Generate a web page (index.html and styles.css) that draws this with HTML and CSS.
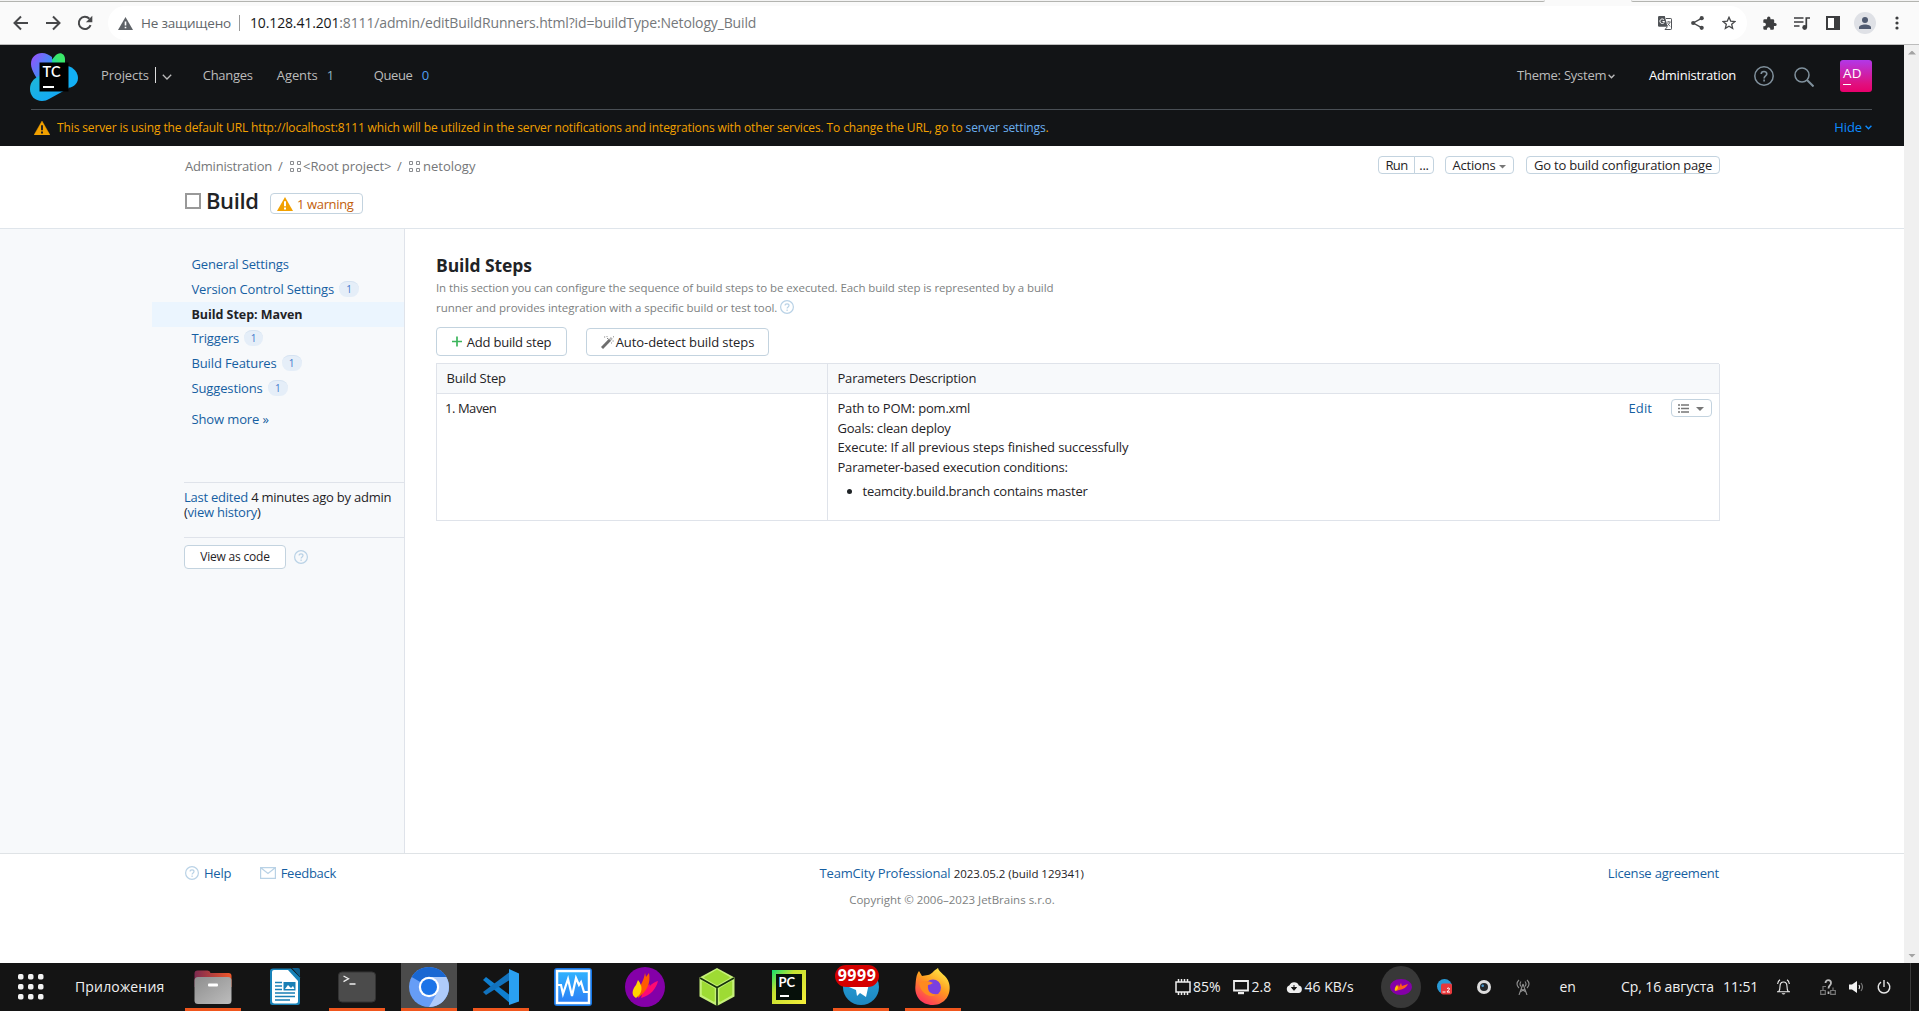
FILE: index.html
```html
<!DOCTYPE html>
<html lang="en">
<head>
<meta charset="utf-8">
<title>Build — Build Steps</title>
<link rel="stylesheet" href="styles.css">
</head>
<body>
<svg class="defs" width="0" height="0">
  <defs>
    <symbol id="warn" viewBox="0 0 16 14"><path d="M8 0 16 14H0Z" fill="#f2a100" stroke="#f2a100" stroke-width=".4" stroke-linejoin="round"/><path d="M7 4.2h2v5H7zM7 10.4h2v2H7z" fill="#222"/></symbol>
    <symbol id="warnlight" viewBox="0 0 16 14"><path d="M8 0 16 14H0Z" fill="#f2a100"/><path d="M7 4.2h2v5H7zM7 10.4h2v2H7z" fill="#fff"/></symbol>
    <symbol id="proj" viewBox="0 0 11 11"><path d="M.5.5h3v3h-3zM7.500.5h3v3h-3zM.5 7.500h3v3h-3zM7.500 7.500h3v3h-3z" fill="none" stroke="#8a8d90" stroke-width="1"/></symbol>
    <symbol id="quest" viewBox="0 0 14 14"><circle cx="7" cy="7" r="6.4" fill="none" stroke="#b9d2e6" stroke-width="1.2"/><path d="M5.1 5.6c0-2.4 3.9-2.4 3.9 0 0 1.4-1.9 1.4-1.9 3M7.1 9.6v1.3" fill="none" stroke="#b9d2e6" stroke-width="1.2"/></symbol>
    <linearGradient id="lgA" x1="0" y1="0" x2="1" y2="1"><stop offset="0" stop-color="#a04bff"/><stop offset=".55" stop-color="#4a86f5"/><stop offset="1" stop-color="#18b2f0"/></linearGradient>
    <linearGradient id="lgB" x1="0" y1="1" x2="1" y2="0"><stop offset="0" stop-color="#12c8c8"/><stop offset=".6" stop-color="#3ae86a"/></linearGradient>
    <linearGradient id="lgC" x1="0" y1="0" x2="1" y2="1"><stop offset="0" stop-color="#1fb7d6"/><stop offset="1" stop-color="#0fa5ff"/></linearGradient>
    <linearGradient id="lgFold" x1="0" y1="0" x2="1" y2="0"><stop offset="0" stop-color="#7d2a50"/><stop offset="1" stop-color="#f0582a"/></linearGradient>
    <linearGradient id="lgGrey" x1="0" y1="0" x2="1" y2="1"><stop offset="0" stop-color="#8e8e8e"/><stop offset="1" stop-color="#bdbdbd"/></linearGradient>
    <linearGradient id="lgMon" x1="0" y1="0" x2="0" y2="1"><stop offset="0" stop-color="#30b4ff"/><stop offset="1" stop-color="#2d7ff5"/></linearGradient>
    <linearGradient id="lgPc" x1="0" y1="0" x2="1" y2="1"><stop offset="0" stop-color="#10e070"/><stop offset=".35" stop-color="#c5e030"/><stop offset="1" stop-color="#f6ee3a"/></linearGradient>
    <linearGradient id="lgFx" x1=".8" y1="0" x2=".2" y2="1"><stop offset="0" stop-color="#fff04a"/><stop offset=".45" stop-color="#ff9a1f"/><stop offset="1" stop-color="#ff2a63"/></linearGradient>
    <linearGradient id="lgTg" x1="0" y1="0" x2="0" y2="1"><stop offset="0" stop-color="#2aa5dc"/><stop offset="1" stop-color="#1c86c0"/></linearGradient>
  </defs>
</svg>

<header class="browser">
  <div class="strip"><i></i><i></i></div>
  <div class="bar-row">
  <div class="nav">
    <svg width="16" height="16" viewBox="0 0 16 16"><path d="M15 8H2M8 1.5 1.5 8 8 14.5" class="ink"/></svg>
    <svg width="16" height="16" viewBox="0 0 16 16"><path d="M1 8h13M8 1.5 14.5 8 8 14.5" class="ink"/></svg>
    <svg width="16" height="16" viewBox="0 0 16 16"><path d="M13.6 10.2A6.1 6.1 0 1 1 12.4 3.8" class="ink"/><path d="M15.3.8v6.4H8.9Z" fill="#47484a"/></svg>
  </div>
  <div class="omnibox">
    <svg width="15" height="13" viewBox="0 0 15 13"><path d="M7.5 0 15 13H0Z" fill="#5f6368"/><path d="M6.7 4.5h1.6v4H6.7zM6.7 9.7h1.6v1.6H6.7z" fill="#fff"/></svg>
    <span class="insecure">Не защищено</span><i class="bar"></i>
    <span class="url"><b>10.128.41.201</b>:8111/admin/editBuildRunners.html?id=buildType:Netology_Build</span>
    <div class="omni-icons">
      <svg width="14" height="14" viewBox="0 0 14 14"><path d="M0 1.2Q0 0 1.2 0h5.6l2.7 10.7H1.2Q0 10.700 0 9.500Z" fill="#505357"/><path d="M6 3.800A2.300 2.300 0 1 0 6.500 5.500H4.500" fill="none" stroke="#fff" stroke-width="1"/><path d="M8 2.500h4.800q.7 0 .7.700v9.600q0 .7-.7.700H7l2.500-2.800" fill="none" stroke="#505357" stroke-width="1"/><path d="M8.800 6h4M10.800 5v1M12 6.200q-.8 2.300-2.800 3.600M9.600 7.200q1 2 2.700 3.100" fill="none" stroke="#505357" stroke-width=".8"/></svg>
      <svg width="13" height="14" viewBox="0 0 13 14"><path d="M11 2.200 2.200 7 11 11.800" fill="none" stroke="#47484a" stroke-width="1.400"/><g fill="#47484a"><circle cx="10.700" cy="2.200" r="2.100"/><circle cx="2.200" cy="7" r="2.100"/><circle cx="10.700" cy="11.800" r="2.100"/></g></svg>
      <svg width="14" height="14" viewBox="0 0 14 14"><path d="m7 1.300 1.700 3.800 4.200.4-3.200 2.800.95 4.100L7 10.200l-3.650 2.200.95-4.100L1.100 5.500l4.200-.4Z" fill="none" stroke="#47484a" stroke-width="1.300"/></svg>
    </div>
  </div>
  <div class="tools">
    <svg width="15" height="15" viewBox="0 0 24 24"><path fill="#3c3d3f" d="M21 11h-1.500V7a2 2 0 0 0-2-2h-4V3.500a2.700 2.700 0 0 0-5.400 0V5h-4a2 2 0 0 0-2 2v3.800H3.600a2.700 2.700 0 0 1 0 5.400H2.100V20a2 2 0 0 0 2 2h3.800v-1.500a2.700 2.700 0 0 1 5.400 0V22h3.800a2 2 0 0 0 2-2v-4H21a2.500 2.500 0 0 0 0-5Z"/></svg>
    <svg width="16" height="13" viewBox="0 0 16 13"><path d="M0 1h9.500M0 5h9.500M0 9h5.500M12.300 10V1H16" fill="none" stroke="#3c3d3f" stroke-width="1.700"/><circle cx="10.700" cy="10.500" r="2.400" fill="#3c3d3f"/></svg>
    <svg width="14" height="14" viewBox="0 0 14 14"><path d="M0 0h14v14H0Z" fill="#3c3d3f"/><path d="M2 2h6v10H2z" fill="#fff"/></svg>
    <svg width="22" height="22" viewBox="0 0 22 22"><circle cx="11" cy="11" r="11" fill="#dfe1e6"/><circle cx="11" cy="8" r="3" fill="#4f5a70"/><path d="M5 17v-1.500c0-4 12-4 12 0V17Z" fill="#4f5a70"/></svg>
    <svg width="4" height="14" viewBox="0 0 4 14" fill="#3c3d3f"><circle cx="2" cy="2" r="1.600"/><circle cx="2" cy="7" r="1.600"/><circle cx="2" cy="12" r="1.600"/></svg>
  </div>
  </div>
</header>

<div class="viewport">
  <div class="page">
    <div class="top">
      <div class="menu">
        <svg class="logo" width="48" height="48" viewBox="0 0 48 48">
          <path d="M37 13c7 1 11 7 11 12 0 7-7 10-11 10Z" fill="#12b0f5"/>
          <path d="M20 9 25 3c4-5 10-3 10 3v8H20Z" fill="url(#lgB)"/>
          <path d="M1 11C1 4 6 0 12 0c4 0 7 2 10 4v26L9 30C7 24 1 18 1 11Z" fill="url(#lgA)"/>
          <path d="M9 23C3 26 0 30 0 36c0 7 5 12 12 12 3 0 5-1 7-2l20-11-16-12Z" fill="url(#lgC)"/>
          <path d="M9.500 9.500h29v29h-29z" fill="#000"/>
          <text x="12.500" y="24" class="logo-t">TC</text><path d="M13 33h11v2H13z" fill="#fff"/>
        </svg>
        <span>Projects</span><i class="bar light"></i>
        <svg width="10" height="6" viewBox="0 0 10 6"><path d="M.8.8 5 5 9.200.8" fill="none" stroke="#bcbcbc" stroke-width="1.300"/></svg>
        <span class="m-ch">Changes</span><span class="m-ag">Agents</span><span class="cnt1">1</span><span class="m-qu">Queue</span><span class="cnt0">0</span>
        <div class="user">
          <span class="theme">Theme: System</span>
          <svg width="7" height="5" viewBox="0 0 7 5"><path d="M.6.8 3.500 3.800 6.400.8" fill="none" stroke="#bcbcbc" stroke-width="1.300"/></svg>
          <span class="admin">Administration</span>
          <svg class="help" width="20" height="20" viewBox="0 0 20 20"><circle cx="10" cy="10" r="9.200" fill="none" stroke="#80919d" stroke-width="1.500"/><path d="M7.200 8c0-3.400 5.600-3.400 5.600 0 0 2-2.700 2-2.700 4.400M10.100 13.600v1.900" fill="none" stroke="#80919d" stroke-width="1.600"/></svg>
          <svg class="find" width="20" height="20" viewBox="0 0 20 20"><circle cx="8" cy="8" r="7" fill="none" stroke="#80919d" stroke-width="1.500"/><path d="m13 13 6.500 6.500" stroke="#80919d" stroke-width="2"/></svg>
          <div class="avatar">AD<i></i></div>
        </div>
      </div>
      <div class="notice">
        <svg width="16" height="14"><use href="#warn"/></svg>
        <span>This server is using the default URL http://localhost:8111 which will be utilized in the server notifications and integrations with other services. To change the URL, go to <a>server settings</a>.</span>
        <span class="hide">Hide<svg width="7" height="5" viewBox="0 0 7 5"><path d="M.6.8 3.500 3.800 6.400.8" fill="none" stroke="#0d8bff" stroke-width="1.400"/></svg></span>
      </div>
    </div>

    <div class="head">
      <div class="crumbs">
        <span>Administration</span><em>/</em><svg width="11" height="11"><use href="#proj"/></svg><span class="root">&lt;Root project&gt;</span><em>/</em><svg width="11" height="11"><use href="#proj"/></svg><span class="neto">netology</span>
        <div class="actions">
          <button class="btn run">Run</button><button class="btn dots">...</button>
          <button class="btn act">Actions<i class="caret"></i></button>
          <button class="btn go">Go to build configuration page</button>
        </div>
      </div>
      <div class="title"><i class="box"></i><h1>Build</h1><span class="badge"><svg width="16" height="14"><use href="#warnlight"/></svg>1 warning</span></div>
    </div>

    <div class="body">
      <aside class="side">
        <ul>
          <li>General Settings</li>
          <li>Version Control Settings<b>1</b></li>
          <li class="on">Build Step: Maven</li>
          <li class="short">Triggers<b>1</b></li>
          <li>Build Features<b>1</b></li>
          <li>Suggestions<b>1</b></li>
          <li class="more">Show more »</li>
        </ul>
        <p class="edited"><a>Last edited</a> 4 minutes ago by admin<br>(<a>view history</a>)</p>
        <div class="code"><button class="btn">View as code</button><svg width="14" height="14"><use href="#quest"/></svg></div>
      </aside>
      <main class="main">
        <h2>Build Steps</h2>
        <p class="desc">In this section you can configure the sequence of build steps to be executed. Each build step is represented by a build<br><span>runner and provides integration with a specific build or test tool.</span> <svg width="14" height="14"><use href="#quest"/></svg></p>
        <div class="btns">
          <button class="btn add"><svg width="10" height="11" viewBox="0 0 10 11"><path d="M5 .5v10M0 5.500h10" stroke="#3cb55c" stroke-width="1.700"/></svg>Add build step</button>
          <button class="btn auto"><svg width="13" height="13" viewBox="0 0 13 13"><path d="m1 12 8-8.300" stroke="#6e6e6e" stroke-width="2.900"/><path d="m9.300 3.500 1.500-1.600" stroke="#b5b5b5" stroke-width="2.600"/><path d="M3 1h1.200M6 2.500h1.200M5.500.6h1M11.500 5h1.200M10 7h1M12 .8h1" stroke="#888" stroke-width="1"/></svg>Auto-detect build steps</button>
        </div>
        <div class="table">
          <div class="th">Build Step</div><div class="th">Parameters Description</div>
          <div class="td first">1. Maven</div>
          <div class="td"><div class="params">Path to POM: pom.xml<br>Goals: clean deploy<br><span>Execute: If all previous steps finished successfully</span><br>Parameter-based execution conditions:<ul><li>teamcity.build.branch contains master</li></ul></div>
            <a class="edit">Edit</a>
            <button class="btn list"><svg width="11" height="9" viewBox="0 0 11 9"><path d="M0 1h2M3 1h8M0 4.500h2M3 4.500h8M0 8h2M3 8h8" stroke="#777" stroke-width="1.300"/></svg><i class="caret"></i></button>
          </div>
        </div>
      </main>
    </div>

    <footer class="foot">
      <div class="row">
        <div class="links"><svg width="14" height="14"><use href="#quest"/></svg><a>Help</a><svg class="mail" width="16" height="12" viewBox="0 0 16 12"><path d="M.6.6h14.800v10.800H.6ZM.8.8 8 6.500 15.200.8" fill="none" stroke="#b9d2e6" stroke-width="1.200"/></svg><a>Feedback</a></div>
        <div class="ver"><a>TeamCity Professional</a> <small>2023.05.2 (build 129341)</small></div>
        <a class="lic">License agreement</a>
      </div>
      <div class="copy">Copyright © 2006–2023 JetBrains s.r.o.</div>
    </footer>
  </div>
  <div class="scroll"><i class="up"></i><i class="down"></i></div>
</div>

<div class="taskbar">
  <svg class="grid" width="26" height="26" viewBox="0 0 26 26" fill="#f2f2f2"><g id="r"><rect width="5.500" height="5.500" rx="1.700"/><rect x="10" width="5.500" height="5.500" rx="1.700"/><rect x="20" width="5.500" height="5.500" rx="1.700"/></g><use href="#r" y="10"/><use href="#r" y="20"/></svg>
  <span class="apps">Приложения</span>
  <div class="dock">
    <div class="open"><svg width="40" height="40" viewBox="0 0 40 40"><path d="M1.500 6.500q0-3 3-3h10q2.500 0 3 2.500h18q3 0 3 3V20h-37Z" fill="url(#lgFold)"/><rect x="1.500" y="10" width="37" height="27" rx="3.500" fill="url(#lgGrey)"/><rect x="15" y="16.500" width="10" height="3" rx="1" fill="#fff"/></svg></div>
    <div><svg width="40" height="40" viewBox="0 0 40 40"><path d="M8 1.500h18l9 9V35.500q0 2.500-2.500 2.500h-25Q5 38 5 35.500V4q0-2.500 3-2.500Z" fill="#1782b8"/><path d="M9 3h14l10 11v20q0 2.500-2.500 2.500h-21Q7 36.500 7 34V5q0-2 2-2Z" fill="#fff"/><path d="M27 1h6q2 0 2 2v7Z" fill="#0d5e8c"/><path d="M10 15.500h7M10 19h7M10 22.500h7M10 26h20M10 29.500h20M10 33h15" stroke="#1a7fb5" stroke-width="1.500"/><rect x="18.500" y="15" width="12" height="8.500" fill="#1a7fb5"/><path d="m20 22 3-4 3 3 2-2 1.500 3Z" fill="#fff"/></svg></div>
    <div class="open"><svg width="40" height="40" viewBox="0 0 40 40"><rect x="1.500" y="5" width="37" height="30" rx="3.500" fill="#4b4b4b" stroke="#343434"/><path d="m6.500 9 5 2.800-5 2.800M12.500 17h6" fill="none" stroke="#eee" stroke-width="1.300"/></svg></div>
    <div class="open cur"><svg width="40" height="40" viewBox="0 0 40 40"><circle cx="20" cy="20" r="20" fill="#669df6"/><path d="M20 10h17.300A20 20 0 0 1 20 40l8.700-15Z" fill="#aecbfa"/><path d="M20 0A20 20 0 0 1 37.300 10H20a10 10 0 0 0-8.700 5L2.700 10A20 20 0 0 1 20 0Z" fill="#1967d2"/><circle cx="20" cy="20" r="10.200" fill="#fff"/><circle cx="20" cy="20" r="8" fill="#1a73e8"/></svg></div>
    <div class="open"><svg width="40" height="40" viewBox="0 0 40 40"><path d="m2 13 3-3 25 19v8Z" fill="#0f7fd0"/><path d="m2 25 3 3L30 12V4Z" fill="#1272bd"/><path d="m28 2 10 4.500v28L28 38Z" fill="#2aa0f2"/></svg></div>
    <div><svg width="40" height="40" viewBox="0 0 40 40"><rect x="1" y="1" width="38" height="38" rx="3" fill="#1677e6"/><rect x="4" y="4" width="32" height="32" fill="url(#lgMon)" stroke="#fff" stroke-width="2.500"/><path d="M5 18h3l2 9 5-15 4 17 4-18 3 7 2-3 3 10h4" fill="none" stroke="#fff" stroke-width="2.200"/></svg></div>
    <div><svg width="40" height="40" viewBox="0 0 40 40"><circle cx="20" cy="20" r="20" fill="#8400a8"/><path d="M16 31c2-8 6-11 8-14 2 1 0 3 0 3 3-4 6-5 9-6-2 8-7 14-17 17Z" fill="#ff0a72"/><path d="M13 31c0-5 1-8 3-13 1-3 3-6 4-12l1 4 3-4c2 10-2 18-11 25Z" fill="#ff5a00"/><path d="M11 31c-5-3-4-8 0-13l2-5c5 6 5 13-2 18Z" fill="#ffd400"/></svg></div>
    <div><svg width="40" height="40" viewBox="0 0 40 40"><path d="m20 1 17.500 9.500v19L20 39 2.500 29.500v-19Z" fill="#c5f078"/><path d="m20 3.500 12 7L20 17.500l-12-7ZM5.500 15 17 22v12L5.500 27.500ZM34.500 15 23 22v12l11.500-6.500Z" fill="#9edb34" stroke="#9edb34" stroke-width="1.500" stroke-linejoin="round"/><path d="m3 11 17 9.500L37 11M20 20.500V39" fill="none" stroke="#16330a" stroke-width="1.600"/></svg></div>
    <div><svg width="40" height="40" viewBox="0 0 40 40"><path d="M3 3h34v34H3Z" fill="url(#lgPc)"/><path d="M7 7h26v26H7Z" fill="#06100a"/><text x="9.500" y="20" class="pc">PC</text><path d="M11 28h9v2h-9z" fill="#fff"/></svg></div>
    <div class="open tg"><svg width="40" height="40" viewBox="0 0 40 40"><circle cx="20" cy="20" r="18" fill="url(#lgTg)"/><path d="m8 20 21-8-4 18-6-4-3 3-1-6Z" fill="#fff"/></svg><b>9999</b></div>
    <div class="open"><svg width="40" height="40" viewBox="0 0 40 40"><path d="M25 1c1 5 9 7 11 15 3 11-4 22-16 22S1 29 2.500 18C3 13 3 8 6 4l3 5 6-1c3 0 5-4 10-7Z" fill="url(#lgFx)"/><circle cx="20" cy="20.500" r="8" fill="#7a3fe0"/><path d="M6 16q7-4 14 0-3 2-5 2c-1 8 5 10 10 9-6 5-17 1-19-11Z" fill="#ff8a20"/></svg></div>
  </div>
  <div class="tray">
    <svg width="16" height="16" viewBox="0 0 16 16"><path d="M1 3h14v10H1ZM3.500 0v3M6.500 0v3M9.500 0v3M12.500 0v3M3.500 13v3M6.500 13v3M9.500 13v3M12.500 13v3" fill="none" stroke="#eee" stroke-width="1.500"/></svg><span>85%</span>
    <svg width="16" height="16" viewBox="0 0 16 16"><path d="M1 2h14v9.500H1Z" fill="none" stroke="#eee" stroke-width="1.800"/><path d="M5 13h6v2.200H5z" fill="#eee"/></svg><span>2.8</span>
    <svg width="16" height="12" viewBox="0 0 16 12"><path d="M4 12a4 4 0 0 1-.5-7.700 5 5 0 0 1 9.300.2A3.800 3.800 0 0 1 12.500 12Z" fill="#eee"/><path d="M8 4v4M5.500 6.500 8 9.300l2.500-2.800Z" stroke="#151515" fill="#151515"/></svg><span>46 KB/s</span>
    <div class="round"><svg width="22" height="16" viewBox="0 0 22 16"><ellipse cx="11" cy="8" rx="11" ry="8" fill="#8400a8"/><path d="M6 12 8 5l1 3 2-4 1 3 6-2q-2 5-9 6Z" fill="#ff5a1c"/><path d="M5 12q-1-3 2-6l1 2q0 3-3 4Z" fill="#ffc400"/></svg></div>
    <svg width="15" height="16" viewBox="0 0 15 16"><circle cx="7.500" cy="7.500" r="7.500" fill="#2a9ad6"/><rect x="4" y="4.500" width="11" height="11" rx="2" fill="#e8393c"/><path d="M5.500 13h3M10 9.500q2.500-1.500 2.500.5l-2.500 3H13" fill="none" stroke="#fff" stroke-width="1"/></svg>
    <svg width="14" height="14" viewBox="0 0 14 14"><circle cx="7" cy="7" r="7" fill="#ddd"/><circle cx="7" cy="7" r="4" fill="#23272a"/><circle cx="5.700" cy="5.700" r="1.300" fill="#4a9ad0"/></svg>
    <svg width="14" height="16" viewBox="0 0 14 16"><path d="M7 5 3 16M7 5l4 11M5 10l5 3M9 10l-5 3M3 1q-4 4 0 8M11 1q4 4 0 8M5 2.500q-2 2.500 0 5M9 2.500q2 2.500 0 5" fill="none" stroke="#8f8f8f" stroke-width="1.100"/></svg>
    <span>en</span><span>Ср, 16 августа</span><span>11:51</span>
    <svg width="13" height="16" viewBox="0 0 13 16"><path d="M0 12.800h13M1.800 12.500Q3 11 3 7.500 3 3 6.500 3T10 7.500q0 3.500 1.200 5M.6 5Q1 2 3 .8M12.400 5Q12 2 10 .8" fill="none" stroke="#eee" stroke-width="1.100"/><path d="M4.500 14.300h4q-2 2.500-4 0Z" fill="#eee"/></svg>
    <svg width="16" height="16" viewBox="0 0 16 16"><path d="M.7 11.500h4.600v3.800H.7ZM10.700 11.500h4.600v3.800h-4.600ZM3 11V7.500h3M13 11V8.500" fill="none" stroke="#777" stroke-width="1.200"/><path d="M5.500 4c0-3.800 5.500-3.800 5.500 0 0 2.500-2.500 2.500-2.500 5.500M8.500 12.500v2.500" fill="none" stroke="#bbb" stroke-width="1.800"/></svg>
    <svg width="15" height="14" viewBox="0 0 15 14"><path d="M0 4.500h3L8 1v12L3 9.500H0Z" fill="#f2f2f2"/><path d="M10 5q1.300 2 0 4" fill="none" stroke="#eee" stroke-width="1.200"/><path d="M12 3q3 4 0 8" fill="none" stroke="#777" stroke-width="1.200"/></svg>
    <svg width="14" height="14" viewBox="0 0 14 14"><path d="M4 2.200a5.800 5.800 0 1 0 6 0M7 0v7" fill="none" stroke="#e6e6e6" stroke-width="1.400"/></svg>
  </div>
</div>
</body>
</html>
```
FILE: styles.css
```css
*{box-sizing:border-box}
body{margin:0;width:1919px;height:1011px;overflow:hidden;display:flex;flex-direction:column;background:#fff;color:#1f2326;font:13px/16px "Open Sans","Noto Sans",sans-serif;letter-spacing:-.2px;white-space:nowrap}
.defs{position:absolute}
svg{display:block;flex:none}
i,em{font-style:normal}
p,h1,h2,ul{margin:0;padding:0}
a{color:#165fa2}
.ink{fill:none;stroke:#47484a;stroke-width:2}
.bar{width:1px;height:16px;background:#9a9a9a}

/* browser toolbar */
.browser{height:45px;background:#fafafa;border-bottom:1px solid #bcbcbc}
.strip{height:2px;display:flex;justify-content:space-between}
.strip i{width:1545px;background:#f3f3f3;border-bottom:1px solid #b3b4b0;border-radius:0 0 4px 0}
.strip i+i{width:288px;border-radius:0 0 0 4px}
.bar-row{height:42px;display:flex;align-items:center}
.nav{width:108px;padding-left:13px;display:flex;gap:16px}
.omnibox{width:1639px;height:34px;padding-left:10px;display:flex;align-items:center;background:#fff;border-radius:17px;font-size:14px}
.insecure{width:98px;margin-left:8px;font-size:13.5px;color:#62666a}
.omnibox .bar{margin-right:10px}
.url{letter-spacing:-.14px;color:#75787b}
.url b{font-weight:400;color:#161719}
.omni-icons{margin-left:auto;padding-right:11px;display:flex;align-items:center;gap:18.500px}
.tools{flex:1;padding-left:15px;display:grid;grid-template-columns:32px 32px 28px 41px 10px;align-items:center}

.viewport{height:918px;display:flex}
.page{width:1904px;display:flex;flex-direction:column}
.scroll{width:15px;padding:5.500px 4px;background:#f0f0f0;display:flex;flex-direction:column;justify-content:space-between}
.up,.down{width:8px;height:4px;background:#a3a3a3;clip-path:polygon(50% 0,100% 100%,0 100%)}
.down{clip-path:polygon(0 0,100% 0,50% 100%)}

/* dark product header */
.top{height:101px;padding:0 32px 0 31px;background:#121416;color:#bcbcbc}
.menu{height:65px;padding-bottom:1px;display:flex;align-items:center;border-bottom:1px solid #494f55}
.menu span{letter-spacing:-.1px;margin-bottom:3px}
.logo{margin:0 23px 0 -1px}
.logo-t{font:600 14.500px Lato,sans-serif;letter-spacing:.3px;fill:#fff}
.light{background:#ddd;margin:0 6px 3px 6px}
.m-ch{width:74px;margin-left:31px;letter-spacing:-.3px!important}
.m-ag{width:50px}
.cnt1{width:47px;color:#8fb3c4}
.m-qu{width:48px;letter-spacing:-.4px!important}
.cnt0{color:#4f9ff0}
.user{margin-left:auto;display:flex;align-items:center}
.menu .theme{width:91px;letter-spacing:-.24px}
.menu .admin{width:89px;margin:0 16px 3px 34px;color:#fff;letter-spacing:-.2px}
.help{margin-bottom:2px}
.find{margin:0 26px 0 20px}
.avatar{width:32px;height:32px;margin-bottom:2px;padding:5px 3px;border-radius:3px;background:linear-gradient(#b238e8,#e0107f 75%,#e8006c);color:#fff;font-size:13.500px;letter-spacing:.2px;display:flex;flex-direction:column;line-height:16px}
.avatar i{width:8px;height:1px;margin-top:3px;background:#fff}
.notice{height:36px;padding-left:3px;display:flex;align-items:center;gap:7px;color:#f2a100;font-size:12px;letter-spacing:-.12px}
.notice a{color:#6cb0f0}
.hide{margin:0 0 2px auto;display:flex;align-items:center;gap:3px;color:#0d8bff;font-size:13px}

/* page heading */
.head{height:83px;padding:10px 184px 0 185px;border-bottom:1px solid #dfe5eb}
.crumbs{height:18px;display:flex;align-items:center;color:#757779}
.crumbs em,.crumbs span,.crumbs>svg{margin-top:2px}
.crumbs em{width:17px;padding-left:5px}
.crumbs span{width:88px}
.crumbs .root{width:89px;margin-left:2px;letter-spacing:-.05px}
.crumbs .neto{width:auto;margin-left:3px;letter-spacing:0}
.actions{margin-left:auto;display:flex}
.btn{height:18px;padding:0 6px;display:flex;align-items:center;justify-content:center;background:#fff;border:1px solid #c3d3df;border-radius:4px;font:inherit;letter-spacing:inherit;color:#1f2326}
.run{width:37px;border-radius:4px 0 0 4px;letter-spacing:-.6px}
.dots{width:20px;margin:0 11px 0 -1px;border-radius:0 4px 4px 0}
.act{width:69px;margin-right:12px}
.go{width:194px}
.caret{width:8px;height:4px;margin:3px 0 0 3px;background:#777;clip-path:polygon(0 0,100% 0,50% 100%)}
.title{height:29px;margin-top:13px;display:flex;align-items:center}
.box{width:16px;height:16px;margin-bottom:1px;border:2px solid #999}
h1{width:63px;margin-bottom:4px;padding-left:5px;font:600 22px/22px "Open Sans",sans-serif;letter-spacing:-.4px}
.badge{height:21px;width:93px;margin:4px 0 0 6px;padding-left:6px;display:flex;align-items:center;gap:4px;border:1px solid #c3d3df;border-radius:4px;color:#c2600b;letter-spacing:-.36px}

/* sidebar */
.body{height:624px;display:flex}
.side{width:405px;padding:22px 0 0 152px;background:#f7f9fb;border-right:1px solid #dfe3ea}
.side ul{list-style:none}
.side li{height:25px;padding:0 0 1px 39.500px;display:flex;align-items:center;gap:5px;color:#165fa2;letter-spacing:-.13px}
.side li:first-child{height:26px}
.side li.on{padding-bottom:0;background:#ebf5fe;color:#1f2326;font-weight:700;font-size:12.500px;letter-spacing:-.05px}
.side li.short{height:24px;padding-bottom:2px}
.side li.more{margin-top:6px}
.side li b{width:20px;height:16px;border-radius:8px;background:#e5eef8;border-top:1px solid #d5e2f1;color:#4379cc;font:10px/14px "Open Sans",sans-serif;text-align:center}
.side li.short b{width:19px}
.edited{height:55px;margin:50px 0 0 32px;padding-top:7px;border-top:1px solid #dfe3ea;line-height:15px;letter-spacing:-.24px}
.code{margin-left:32px;padding-top:7px;border-top:1px solid #dfe3ea;display:flex;align-items:center;gap:8px}
.code .btn{width:102px;height:24px;font-size:12px}

/* main column */
.main{width:1314px;padding:25px 0 0 31px}
h2{font:700 17.500px/22px "Open Sans",sans-serif;letter-spacing:-.1px}
.desc{margin-top:2px;font-size:11.500px;line-height:20px;letter-spacing:-.09px;color:#7d7f81}
.desc span{letter-spacing:-.04px}
.desc svg{display:inline;vertical-align:-2px}
.btns{height:29px;margin-top:9px;display:flex;align-items:flex-end;gap:19px}
.add{width:131px;height:29px;gap:5px}
.auto{width:183px;height:28px;gap:2px;letter-spacing:-.08px}
.table{margin-top:7px;display:grid;grid-template-columns:391px 892px;border:1px solid #dfe3ea;border-width:1px 0 0 1px;letter-spacing:-.2px}
.th,.td{border:1px solid #dfe3ea;border-width:0 1px 1px 0;padding-left:9.500px}
.th{height:30px;line-height:29px;background:#f7f9fb}
.td{height:127px;padding-top:5px;display:flex;align-items:flex-start;line-height:19.600px}
.first{padding-left:8px;letter-spacing:-.45px}
.params{width:791px}
.params span{letter-spacing:-.13px}
.params ul{padding-left:25px;margin-top:5px}
.edit{width:42px;letter-spacing:.1px}
.list{width:41px}
.list .caret{margin:2px 0 0 7px}

/* footer */
.foot{flex:1;padding:11px 185px 0 185px;border-top:1px solid #dfe3e6}
.row{display:grid;grid-template-columns:1fr 265px 1fr;align-items:center}
.links{margin-top:-2px;display:flex;align-items:center;gap:5px}
.links svg{margin-top:1px}
.links a{letter-spacing:-.25px}
.links .mail{margin:0 0 0 23.500px}
.ver{letter-spacing:-.16px}
.ver small{font-size:11.500px;letter-spacing:-.04px}
.lic{margin-top:-2px;text-align:right}
.copy{margin-top:10px;text-align:center;font-size:11.500px;letter-spacing:0;color:#7d7f81}

/* desktop panel */
.taskbar{height:48px;display:flex;align-items:center;background:#141414;color:#f0f0f0;font-size:14px;letter-spacing:0}
.grid{margin:0 31px 0 18px}
.apps{width:110px;letter-spacing:.16px}
.dock{display:flex;gap:16px}
.dock div{width:56px;height:48px;padding-top:4px;display:flex;justify-content:center;align-items:flex-start}
.dock .open{border-bottom:3px solid #f0561d}
.dock .cur{background:#4b4b4b}
.dock .tg{position:relative}
.tg b{position:absolute;left:2px;top:2px;width:44px;height:22px;border-radius:11px;background:#d40000;color:#fff;font:700 16px/20px "Noto Sans",sans-serif;text-align:center;letter-spacing:.5px}
.pc{font:700 13px Lato,sans-serif;fill:#fff}
.tray{height:48px;width:736px;margin-left:214px;display:grid;align-items:center;grid-template-columns:18px 39.500px 19px 34px 19px 76px 56px 40px 39.500px 43.500px 61.500px 102px 54px 43px 29px 28px 33px;border-right:1px solid #3a3a3a}
.tray span:nth-of-type(n+4){letter-spacing:-.1px}
.round{width:40px;height:42px;border-radius:50%;background:#383838;display:grid;place-items:center}
```
